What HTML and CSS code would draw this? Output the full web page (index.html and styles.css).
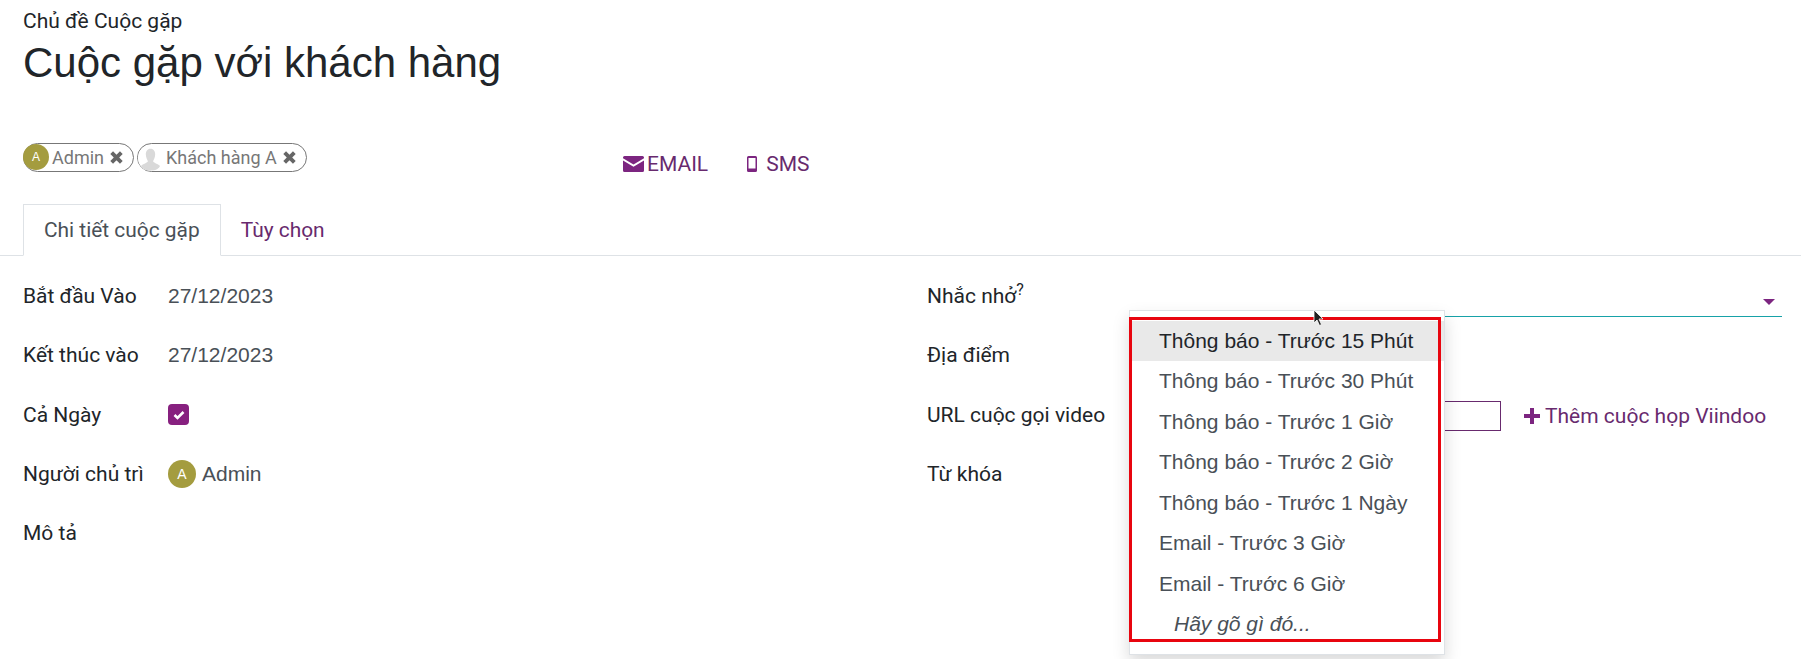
FILE: index.html
```html
<!DOCTYPE html>
<html lang="en">
  <head>
    <meta charset="UTF-8" />
    <title>Cuộc gặp với khách hàng</title>
    <link rel="stylesheet" href="styles.css">
  </head>
  <body>
    <div class="sheet">
      <div class="title-block">
        <div class="title-label">Chủ đề Cuộc gặp</div>
        <h1 class="title">Cuộc gặp với khách hàng</h1>
      </div>

      <div class="attendees">
        <div class="chips">
          <span class="chip">
            <span class="avatar avatar-small">A</span>
            <span class="chip-name">Admin</span>
            <svg class="chip-x" viewBox="0 0 14 14"><path d="M2.500 2.500 11.500 11.500M11.500 2.500 2.500 11.500" /></svg>
          </span>
          <span class="chip">
            <svg class="avatar-ghost" viewBox="0 0 24 24"><rect width="24" height="24" fill="#fff" /><path d="M12 3c3 0 4.500 2.400 4.500 5.500S15 14 14.500 15c0 1.500 5 2.500 6.500 4.500V24H3v-4.500C4.500 17.500 9.500 16.500 9.500 15 9 14 7.500 11.600 7.500 8.500S9 3 12 3z" fill="#d9d9d9" /></svg>
            <span class="chip-name">Khách hàng A</span>
            <svg class="chip-x" viewBox="0 0 14 14"><path d="M2.500 2.500 11.500 11.500M11.500 2.500 2.500 11.500" /></svg>
          </span>
        </div>
        <div class="send-links">
          <a class="send-link">
            <svg class="icon-mail" viewBox="0 0 21 16"><path d="M1.500 0h18A1.500 1.500 0 0 1 21 1.500v.7l-10.500 6.300L0 2.200v-.7A1.500 1.500 0 0 1 1.500 0z" /><path d="M0 4.400l10.500 6.300L21 4.400v10.100a1.500 1.500 0 0 1-1.500 1.500h-18A1.500 1.500 0 0 1 0 14.500z" /></svg>
            EMAIL
          </a>
          <a class="send-link">
            <svg class="icon-phone" viewBox="0 0 10 16"><path fill-rule="evenodd" d="M1.500 0h7A1.500 1.500 0 0 1 10 1.500v13A1.500 1.500 0 0 1 8.500 16h-7A1.500 1.500 0 0 1 0 14.500v-13A1.500 1.500 0 0 1 1.500 0zM1.500 2v10.500h7V2z" /></svg>
            SMS
          </a>
        </div>
      </div>

      <div class="tabs">
        <a class="tab tab-active">Chi tiết cuộc gặp</a>
        <a class="tab">Tùy chọn</a>
      </div>

      <div class="form">
        <div class="col">
          <div class="row">
            <label class="label">Bắt đầu Vào</label>
            <span class="value">27/12/2023</span>
          </div>
          <div class="row">
            <label class="label">Kết thúc vào</label>
            <span class="value">27/12/2023</span>
          </div>
          <div class="row">
            <label class="label">Cả Ngày</label>
            <span class="checkbox">
              <svg viewBox="0 0 12 10"><path d="M1.500 5 4.500 8 10.500 2" fill="none" stroke="#fff" stroke-width="2.600" /></svg>
            </span>
          </div>
          <div class="row">
            <label class="label">Người chủ trì</label>
            <span class="value value-user"><span class="avatar">A</span>Admin</span>
          </div>
          <div class="row">
            <label class="label">Mô tả</label>
          </div>
        </div>

        <div class="col col-right">
          <div class="row">
            <label class="label label-right">Nhắc nhở<sup>?</sup></label>
            <div class="select-line"><span class="caret"></span></div>
          </div>
          <div class="row">
            <label class="label label-right">Địa điểm</label>
          </div>
          <div class="row">
            <label class="label label-right">URL cuộc gọi video</label>
            <div class="video-field">
              <span class="video-input"></span>
              <a class="add-meeting">
                <svg viewBox="0 0 16 16"><path d="M6 0h4v6h6v4h-6v6H6v-6H0V6h6z" /></svg>
                Thêm cuộc họp Viindoo
              </a>
            </div>
          </div>
          <div class="row">
            <label class="label label-right">Từ khóa</label>
          </div>

          <ul class="dropdown">
            <li class="option option-active">Thông báo - Trước 15 Phút</li>
            <li class="option">Thông báo - Trước 30 Phút</li>
            <li class="option">Thông báo - Trước 1 Giờ</li>
            <li class="option">Thông báo - Trước 2 Giờ</li>
            <li class="option">Thông báo - Trước 1 Ngày</li>
            <li class="option">Email - Trước 3 Giờ</li>
            <li class="option">Email - Trước 6 Giờ</li>
            <li class="option option-hint">Hãy gõ gì đó...</li>
          </ul>
          <div class="red-box"></div>
          <svg class="cursor" viewBox="0 0 12 18"><path d="M1 1v13l3-3 2.500 5.500 2-1L6 10h4z" fill="#222" stroke="#fff" stroke-width=".8" /></svg>
        </div>
      </div>
    </div>
  </body>
</html>
```

FILE: styles.css
```css
* {
  margin: 0;
  padding: 0;
  box-sizing: border-box;
}

body {
  font-family: Roboto, "Noto Sans", sans-serif;
  background: white;
  color: #212529;
  overflow: hidden;
}

.sheet {
  width: 1801px;
  height: 659px;
  overflow: hidden;
}

.title-block {
  padding: 9px 23px 0;
}

.title-label {
  font-size: 21px;
  line-height: 24px;
}

.title {
  font-family: "Liberation Sans", Arial, sans-serif;
  font-size: 42px;
  font-weight: 400;
  line-height: 52px;
  margin-top: 4px;
}

/* attendees + send buttons */
.attendees {
  display: flex;
  align-items: center;
  height: 34px;
  margin-top: 52px;
  padding-left: 23px;
}

.chips {
  display: flex;
  gap: 3px;
  width: 600px;
}

.chip {
  display: flex;
  align-items: center;
  height: 29px;
  margin-top: -1px;
  border: 1px solid #777;
  border-radius: 15px;
  font-size: 18px;
  color: #777;
  padding-right: 9px;
}

.chip-name {
  margin: 0 5px 0 3px;
}

.chip-x {
  width: 15px;
  height: 15px;
  fill: none;
  stroke: #666;
  stroke-width: 3.600;
}

.avatar {
  display: flex;
  align-items: center;
  justify-content: center;
  width: 28px;
  height: 28px;
  border-radius: 50%;
  background: #a49c3f;
  color: #fff;
  font-family: "Liberation Sans", sans-serif;
  font-size: 14px;
}

.avatar-small {
  width: 26px;
  height: 26px;
  margin: -2px 0 0 -1px;
  font-size: 12px;
}

.avatar-ghost {
  width: 25px;
  height: 26px;
  border-radius: 50%;
}

.send-links {
  display: flex;
  gap: 39px;
  margin-top: 12px;
}

.send-link {
  display: flex;
  align-items: center;
  font-size: 21px;
  color: #682a6e;
}

.icon-mail {
  width: 21px;
  height: 16px;
  fill: #7c2580;
  margin-right: 3px;
}

.icon-phone {
  width: 10px;
  height: 16px;
  fill: #7c2580;
  margin-right: 9px;
}

/* tabs */
.tabs {
  display: flex;
  height: 52px;
  margin-top: 29px;
  padding-left: 23px;
  border-bottom: 1px solid #dee2e6;
}

.tab {
  font-size: 20.900px;
  line-height: 52px;
  padding: 0 20px;
  color: #682a6e;
}

.tab-active {
  color: #495057;
  background: white;
  border: 1px solid #dee2e6;
  border-bottom: 1px solid white;
  height: 52px;
  line-height: 50px;
}

/* form */
.form {
  display: flex;
  padding: 10.500px 0 0 23px;
}

.col {
  width: 904px;
}

.col-right {
  position: relative;
  width: 855px;
}

.row {
  display: flex;
  align-items: center;
  height: 59.250px;
}

.label {
  width: 145px;
  font-size: 21px;
  color: #212529;
}

.label-right {
  width: 209px;
}

.label sup {
  font-size: 16px;
  line-height: 0;
}

.value {
  font-family: "Liberation Sans", sans-serif;
  font-size: 21px;
  color: #495057;
}

.value-user {
  display: flex;
  align-items: center;
  gap: 6px;
}

.checkbox {
  display: flex;
  align-items: center;
  justify-content: center;
  width: 21px;
  height: 21px;
  border-radius: 4px;
  background: #87207f;
}

.checkbox svg {
  width: 12px;
  height: 10px;
}

.select-line {
  position: relative;
  flex: 1;
  align-self: flex-start;
  height: 33px;
  margin-top: 17px;
  border-bottom: 1px solid #17a2a8;
}

.caret {
  position: absolute;
  right: 7px;
  top: 15px;
  border-left: 6px solid transparent;
  border-right: 6px solid transparent;
  border-top: 6px solid #7c2580;
}

.video-field {
  display: flex;
  align-items: center;
  flex: 1;
  margin-top: 2px;
}

.video-input {
  width: 365px;
  height: 30px;
  border: 1px solid #682a6e;
}

.add-meeting {
  display: flex;
  align-items: center;
  gap: 5px;
  margin-left: 23px;
  font-size: 21px;
  color: #682a6e;
}

.add-meeting svg {
  width: 16px;
  height: 16px;
  fill: #7c2580;
}

/* dropdown overlay */
.dropdown {
  position: absolute;
  left: 202px;
  top: 43px;
  width: 316px;
  height: 345px;
  list-style: none;
  background: white;
  border: 1px solid #dee2e6;
  padding-top: 10px;
  box-shadow: 0 8px 16px rgba(0, 0, 0, 0.15);
  font-family: "Liberation Sans", sans-serif;
}

.option {
  height: 40.500px;
  line-height: 40.500px;
  padding-left: 29px;
  font-size: 21px;
  color: #495057;
  white-space: nowrap;
}

.option-active {
  background: #e9e9e9;
  color: #212529;
}

.option-hint {
  padding-left: 44px;
  font-style: italic;
}

.red-box {
  position: absolute;
  left: 202px;
  top: 50px;
  width: 312px;
  height: 325px;
  border: 3px solid #e8050f;
}

.cursor {
  position: absolute;
  left: 386px;
  top: 42px;
  width: 12px;
  height: 18px;
}
```
